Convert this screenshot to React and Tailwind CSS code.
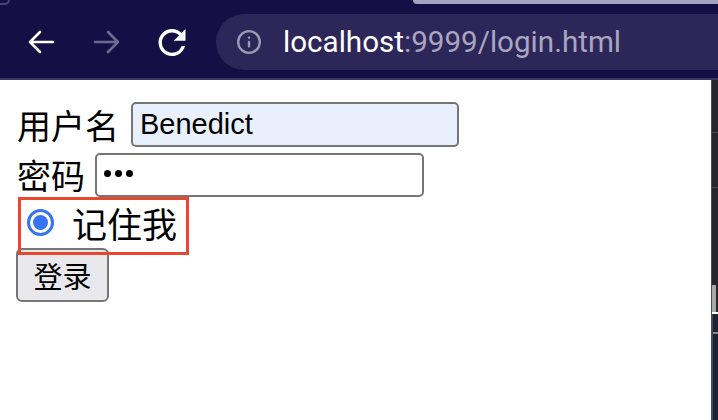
import React from 'react';
import { Info } from 'lucide-react';

const cjk = { fontFamily: "'Noto Sans CJK SC', sans-serif" };

const Arrow = ({ color, flip }) => (
    <svg width="28" height="24" viewBox="0 0 28 24" className={flip ? '-scale-x-100' : ''}>
        <path d="M26 12H3M13 2L3 12l10 10" fill="none" stroke={color} strokeWidth="2.6" strokeLinecap="round" strokeLinejoin="round" />
    </svg>
);

const Reload = () => (
    <svg width="28" height="27" viewBox="4 4 16 16">
        <path
            fill="white"
            d="M17.65 6.35A7.958 7.958 0 0012 4c-4.42 0-7.99 3.58-7.99 8s3.57 8 7.99 8c3.73 0 6.84-2.55 7.73-6h-2.08A5.99 5.99 0 0112 18c-3.31 0-6-2.69-6-6s2.69-6 6-6c1.66 0 3.14.69 4.22 1.78L13 11h7V4l-2.35 2.35z"
        />
    </svg>
);

const Toolbar = () => (
    <header className="relative h-[78px] bg-[#160f46] flex items-center pt-[6px] pl-[27px]">
        {/* tab edges peeking at the top */}
        <div className="absolute top-0 left-[413px] right-0 h-[4px] bg-[#a3a3bd] rounded-bl-[8px]" />
        <div className="absolute -top-[6px] -left-[6px] w-[16px] h-[11px] border-2 border-[#4a4580] rounded-full" />

        <Arrow color="white" />
        <div className="ml-[38px]"><Arrow color="#6d6991" flip /></div>
        <div className="ml-[37px]"><Reload /></div>

        <div className="ml-[30px] flex-1 h-[56px] rounded-l-full bg-[#2d2658] flex items-center pl-[20px]">
            <Info size={26} strokeWidth={2.2} color="#9c99b4" />
            <span className="ml-[21px] text-[29.6px]" style={{ fontFamily: 'Roboto, sans-serif' }}>
                <span className="text-white">localhost</span>
                <span className="text-[#a9a6c2]">:9999/login.html</span>
            </span>
        </div>
    </header>
);

const Scrollbar = () => (
    <aside className="w-[7px] border-l border-[#4b4b50] bg-[#26272b] flex flex-col">
        <div className="h-[52px]" />
        <div className="h-[1px] bg-[#4a4a4e]" />
        <div className="h-[54px]" />
        <div className="h-[1px] bg-[#4a4a4e]" />
        <div className="h-[97px]" />
        <div className="h-[27px] bg-[#a8a8a8] mr-[2px]" />
        <div className="h-[2px] bg-white" />
        <div className="flex-1 bg-[#1d2333] border-l border-[#3e4a5e] pt-[18px]">
            <div className="h-[2px] bg-[#8a8a8a]" />
        </div>
    </aside>
);

export default function App() {
    return (
        <div className="w-[718px] h-[420px] flex flex-col overflow-hidden bg-white">
            <Toolbar />
            <div className="h-[2px] bg-[#3b3664]" />
            <div className="flex-1 flex">
                <main className="relative flex-1 pl-[17px] pt-[22px] text-black">
                    <div className="flex items-center h-[45px]">
                        <span className="text-[34px] leading-none" style={cjk}>用户名</span>
                        <div className="ml-[12px] w-[328px] h-[45px] border-2 border-[#767676] rounded-[5px] bg-[#e8f0fe] flex items-center pl-[7px]">
                            <span className="text-[29px]" style={{ fontFamily: "'Liberation Sans', Arial, sans-serif" }}>Benedict</span>
                        </div>
                    </div>

                    <div className="flex items-center h-[44px] mt-[6px]">
                        <span className="text-[34px] leading-none" style={cjk}>密码</span>
                        <div className="ml-[10px] w-[329px] h-[44px] border-2 border-[#767676] rounded-[5px] bg-white flex items-center gap-[4px] pl-[7px] pb-[4px]">
                            <span className="w-[7px] h-[7px] rounded-full bg-black" />
                            <span className="w-[7px] h-[7px] rounded-full bg-black" />
                            <span className="w-[7px] h-[7px] rounded-full bg-black" />
                        </div>
                    </div>

                    <div className="flex items-center h-[51px]">
                        <div className="ml-[10px] w-[27px] h-[27px] rounded-full border-[3px] border-[#3874f2] flex items-center justify-center">
                            <div className="w-[15px] h-[15px] rounded-full bg-[#3874f2]" />
                        </div>
                        <span className="ml-[18px] text-[35px] leading-none" style={cjk}>记住我</span>
                    </div>

                    <button className="-ml-[1px] w-[93px] h-[54px] border-2 border-[#767676] rounded-[6px] bg-[#e9e9ed] text-[29px] leading-none" style={cjk}>
                        登录
                    </button>

                    {/* annotation box drawn over the form */}
                    <div className="absolute left-[18px] top-[117px] w-[171px] h-[58px] border-[3px] border-[#e8462f]" />
                </main>
                <Scrollbar />
            </div>
        </div>
    );
}
